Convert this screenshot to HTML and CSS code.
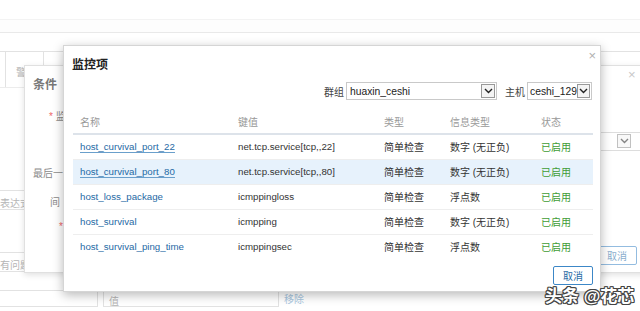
FILE: index.html
```html
<!DOCTYPE html>
<html lang="zh">
<head>
  <meta charset="UTF-8">
  <title>监控项</title>
  <link rel="stylesheet" href="styles.css">
</head>
<body>
  <!-- Page behind the dialogs -->
  <div class="page">
    <div class="topbar"></div>
    <div class="subbar"></div>
    <div class="tabs">
      <span class="tab tab-empty"></span>
      <span class="tab">警</span>
    </div>
    <div class="field field-expr">表达式</div>
    <div class="field field-problem">有问题</div>
    <div class="bottom-row">
      <span class="input input-name"></span>
      <span class="input input-value">值</span>
      <a class="remove">移除</a>
    </div>
  </div>

  <!-- Condition dialog (behind) -->
  <div class="dialog dialog-cond">
    <span class="close">&times;</span>
    <h2 class="cond-title">条件</h2>
    <div class="cond-row row-item"><span class="req">*</span> 监</div>
    <div class="cond-select">
      <span class="arrow"><svg width="9" height="6" viewBox="0 0 9 6"><path d="M1 1l3.5 3.5L8 1" fill="none" stroke="#333" stroke-width="1.4"/></svg></span>
    </div>
    <div class="cond-row row-last">最后一</div>
    <div class="cond-row row-gap">间</div>
    <div class="cond-row row-req"><span class="req">*</span></div>
    <div class="cond-footer">
      <button class="btn btn-faded">取消</button>
    </div>
  </div>

  <!-- Items dialog -->
  <div class="dialog dialog-items">
    <span class="close">&times;</span>
    <h1 class="dialog-title">监控项</h1>

    <div class="filters">
      <label class="filter-label">群组</label>
      <div class="select select-group">
        <span class="select-text">huaxin_ceshi</span>
        <span class="arrow"><svg width="9" height="6" viewBox="0 0 9 6"><path d="M1 1l3.5 3.5L8 1" fill="none" stroke="#222" stroke-width="1.4"/></svg></span>
      </div>
      <label class="filter-label">主机</label>
      <div class="select select-host">
        <span class="select-text">ceshi_129</span>
        <span class="arrow"><svg width="9" height="6" viewBox="0 0 9 6"><path d="M1 1l3.5 3.5L8 1" fill="none" stroke="#222" stroke-width="1.4"/></svg></span>
      </div>
    </div>

    <table class="items">
      <colgroup>
        <col style="width: 158px">
        <col style="width: 146px">
        <col style="width: 66px">
        <col style="width: 91px">
        <col>
      </colgroup>
      <thead>
        <tr>
          <th>名称</th>
          <th>键值</th>
          <th>类型</th>
          <th>信息类型</th>
          <th>状态</th>
        </tr>
      </thead>
      <tbody>
        <tr>
          <td><a class="link visited">host_curvival_port_22</a></td>
          <td class="key">net.tcp.service[tcp,,22]</td>
          <td>简单检查</td>
          <td>数字 (无正负)</td>
          <td class="status">已启用</td>
        </tr>
        <tr class="hover">
          <td><a class="link visited">host_curvival_port_80</a></td>
          <td class="key">net.tcp.service[tcp,,80]</td>
          <td>简单检查</td>
          <td>数字 (无正负)</td>
          <td class="status">已启用</td>
        </tr>
        <tr>
          <td><a class="link">host_loss_package</a></td>
          <td class="key">icmppingloss</td>
          <td>简单检查</td>
          <td>浮点数</td>
          <td class="status">已启用</td>
        </tr>
        <tr>
          <td><a class="link">host_survival</a></td>
          <td class="key">icmpping</td>
          <td>简单检查</td>
          <td>数字 (无正负)</td>
          <td class="status">已启用</td>
        </tr>
        <tr>
          <td><a class="link">host_survival_ping_time</a></td>
          <td class="key">icmppingsec</td>
          <td>简单检查</td>
          <td>浮点数</td>
          <td class="status">已启用</td>
        </tr>
      </tbody>
    </table>

    <div class="dialog-footer">
      <button class="btn">取消</button>
    </div>
  </div>

  <div class="watermark">头条 @花芯</div>
</body>
</html>
```

FILE: styles.css
```css
:root {
  --link: #1f6aa5;
  --text: #333;
  --muted: #8a8a8a;
  --line: #e6e6e6;
  --green: #3f9c35;
}

* {
  margin: 0;
  padding: 0;
  box-sizing: border-box;
}

body {
  width: 640px;
  height: 311px;
  overflow: hidden;
  position: relative;
  background: #fff;
  color: var(--text);
  font-family: "Liberation Sans", "Noto Sans CJK SC", sans-serif;
  font-size: 10px;
}

/* Background page */
.page {
  color: #b5b5b5;
}

.topbar {
  height: 20px;
  border-bottom: 1px solid #f3f3f3;
}

.subbar {
  height: 13px;
  border-bottom: 1px solid #e9e9e9;
  background: #fdfdfd;
}

.tabs {
  margin-top: 18px;
  height: 37px;
  display: flex;
  border-top: 1px solid #e2e2e2;
  border-bottom: 1px solid #ececec;
}

.tab {
  width: 38px;
  padding: 12px 0 0 10px;
  border-right: 1px solid #e2e2e2;
}

.tab-empty {
  width: 6px;
  padding: 0;
}

.field {
  width: 60px;
  height: 20px;
  padding: 4px 0 0 0;
  border: 1px solid #e2e2e2;
  border-left: none;
}

.field-expr {
  margin-top: 102px;
}

.field-problem {
  margin-top: 42px;
}

.bottom-row {
  margin-top: 18px;
  display: flex;
  align-items: center;
  gap: 5px;
}

.input {
  height: 17px;
  border: 1px solid #e2e2e2;
  padding: 2px 5px;
}

.input-name {
  width: 98px;
  border-left: none;
}

.input-value {
  width: 176px;
}

.remove {
  color: #a8c6de;
}

/* Dialogs */
.dialog {
  position: absolute;
  background: #fff;
  border: 1px solid #e0e0e0;
}

.close {
  position: absolute;
  color: #b0b0b0;
  font-size: 13px;
  line-height: 1;
}

.dialog-cond {
  left: 24px;
  top: 65px;
  width: 640px;
  height: 208px;
  box-shadow: 0 2px 6px rgba(0, 0, 0, 0.12);
  color: #888;
}

.dialog-cond .close {
  left: 603px;
  top: 2px;
  color: #c8c8c8;
}

.cond-title {
  font-size: 12px;
  font-weight: 700;
  color: #777;
  padding: 12px 0 0 8px;
  line-height: 14px;
}

.cond-row {
  color: #8a8a8a;
}

.row-item {
  padding: 16px 0 0 24px;
}

.row-last {
  padding: 42px 0 0 8px;
}

.row-gap {
  padding: 14px 0 0 25px;
}

.row-req {
  padding: 12px 0 0 34px;
  height: 14px;
}

.req {
  color: #e66;
}

.cond-select {
  position: absolute;
  left: 568px;
  top: 66px;
  width: 72px;
  height: 19px;
  border: 1px solid #ddd;
  padding: 1px;
}

.cond-select .arrow {
  margin-left: 22px;
  opacity: 0.6;
}

.cond-footer {
  position: absolute;
  left: 572px;
  top: 180px;
}

.btn-faded {
  opacity: 0.55;
  width: 38px;
}

/* Items dialog */
.dialog-items {
  left: 63px;
  top: 45px;
  width: 538px;
  height: 247px;
  padding: 0 9px;
  border-color: #d5d5d5;
  box-shadow: 0 3px 10px rgba(0, 0, 0, 0.28);
}

.dialog-items .close {
  right: 4px;
  top: 3px;
}

.dialog-title {
  font-size: 12px;
  font-weight: 700;
  color: #222;
  line-height: 14px;
  padding-top: 12px;
  margin-left: -1px;
}

.filters {
  margin-top: 10px;
  display: flex;
  justify-content: flex-end;
  align-items: center;
}

.filter-label {
  color: #444;
  margin-right: 2px;
}

.select {
  height: 18px;
  border: 1px solid #c9c9c9;
  display: flex;
  align-items: center;
  justify-content: space-between;
  padding: 0 1px 0 3px;
  color: #222;
  font-size: 10.3px;
}

.select-group {
  width: 151px;
  margin-right: 8px;
}

.select-host {
  width: 65px;
  padding-left: 2px;
  margin-right: -1px;
}

.arrow {
  width: 14px;
  height: 14px;
  border: 1px solid #999;
  background: #f4f4f4;
  display: flex;
  align-items: center;
  justify-content: center;
}

.items {
  margin-top: 9px;
  width: 520px;
  border-collapse: collapse;
  table-layout: fixed;
}

.items th {
  height: 25px;
  padding-left: 7px;
  text-align: left;
  font-weight: 400;
  color: #999;
  border-bottom: 2px solid #dde3ea;
}

.items td {
  height: 25px;
  padding-left: 7px;
  border-bottom: 1px solid #eeeeee;
  color: #333;
  white-space: nowrap;
}

.items tbody tr:last-child td {
  border-bottom: none;
}

.items tr.hover td {
  background: #e7f2fc;
}

.items td.key {
  font-size: 9.7px;
}

.link {
  color: var(--link);
  text-decoration: none;
  font-size: 9.7px;
}

.link.visited {
  border-bottom: 1px solid #6a9fcb;
}

.items td.status {
  color: var(--green);
}

.dialog-footer {
  margin-top: 7px;
  display: flex;
  justify-content: flex-end;
  margin-right: -2px;
}

.btn {
  width: 40px;
  height: 19px;
  border: 1px solid #3c87c7;
  border-radius: 2px;
  background: #fff;
  color: var(--link);
  font-family: inherit;
  font-size: 10px;
}

.watermark {
  position: absolute;
  left: 545px;
  top: 282px;
  font-size: 17px;
  font-weight: 700;
  color: #fff;
  text-shadow: 1px 0 0 #444, -1px 0 0 #444, 0 1px 0 #444, 0 -1px 0 #444,
    1px 1px 0 #444, -1px -1px 0 #444, 1px -1px 0 #444, -1px 1px 0 #444;
}
```
